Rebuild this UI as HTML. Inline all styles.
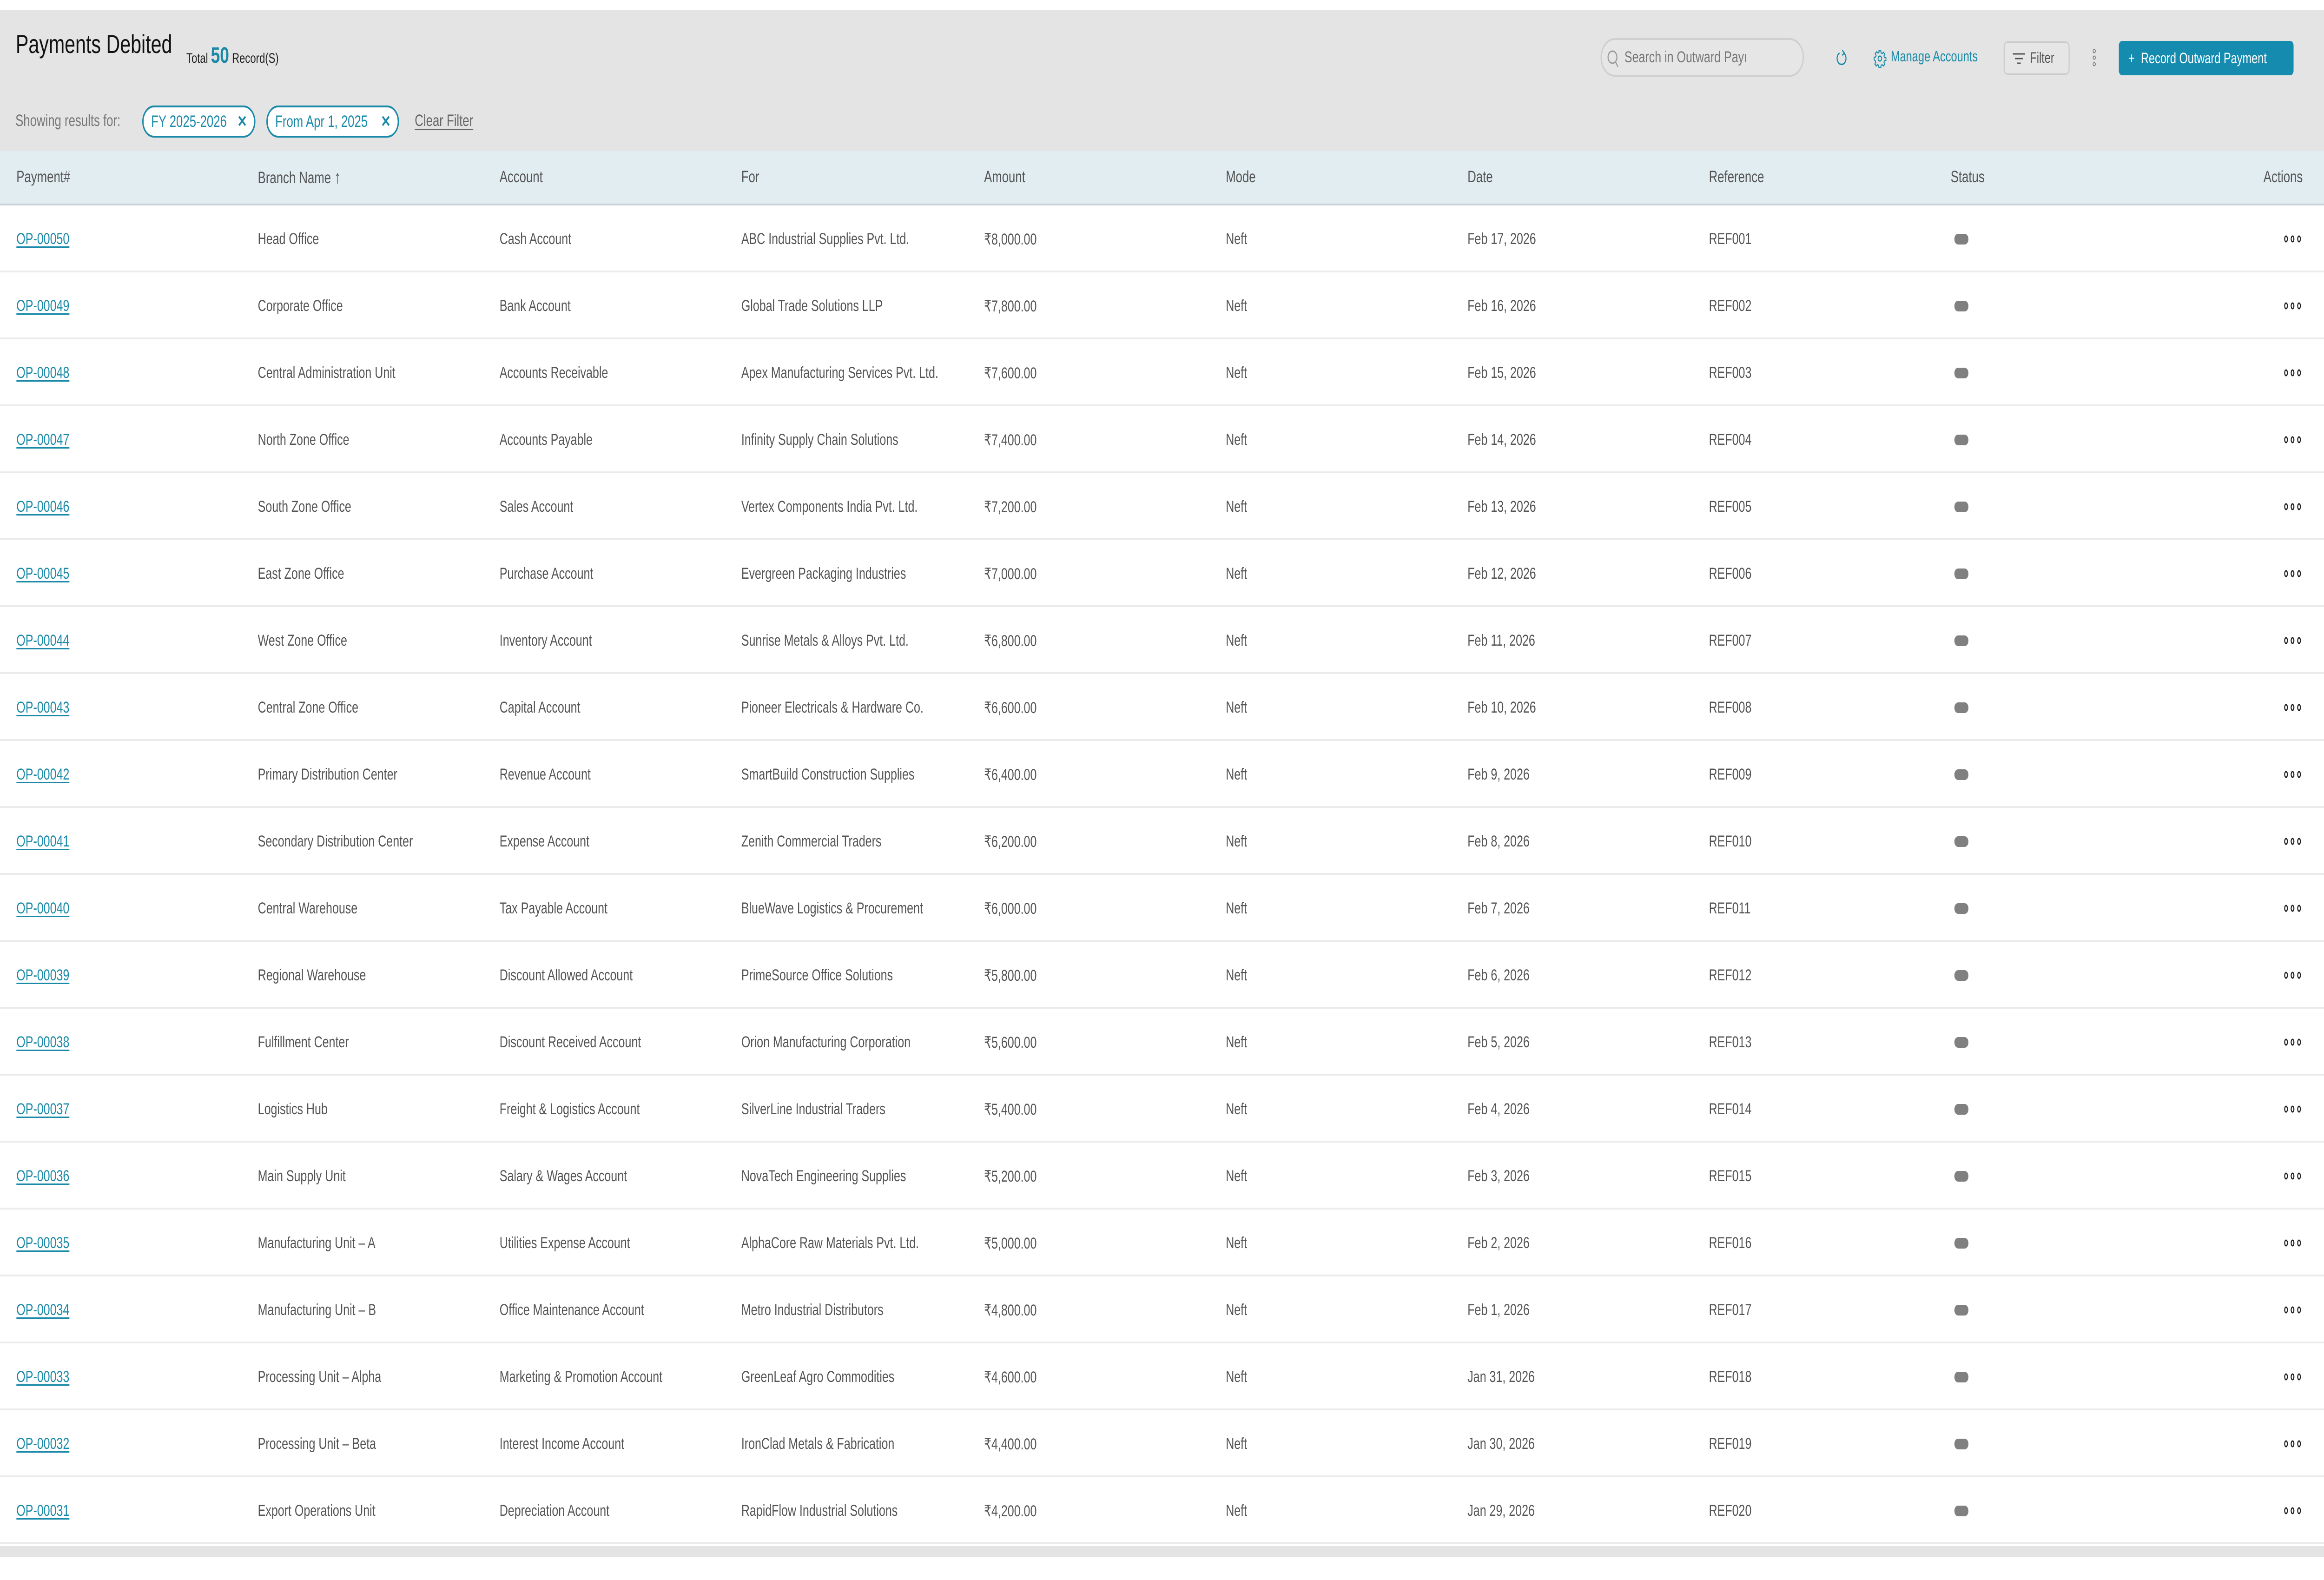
<!DOCTYPE html>
<html><head><meta charset="utf-8"><style>
*{margin:0;padding:0;box-sizing:border-box}
html,body{width:100%;height:100%;overflow:hidden;background:#fff}
body{font-family:"Liberation Sans",sans-serif;color:#555}
#pg{position:absolute;left:0;top:0;width:6797px;height:3399px;transform-origin:0 0;overflow:hidden;background:#fff}
.a{position:absolute;white-space:nowrap}
#top{position:absolute;left:0;top:21px;width:6797px;height:304px;background:#e4e4e4}
#hdr{position:absolute;left:0;top:325px;width:6797px;height:117px;background:#e2edf1;border-bottom:4px solid #c9d1d6}
.h{position:absolute;top:361px;font-size:35px;color:#555}
.row{position:absolute;left:0;width:6797px;height:144px;border-bottom:4px solid #ebebeb}
.c{position:absolute;top:53px;font-size:34px;color:#555;white-space:nowrap}
.lk{color:#1a8aa8;text-decoration:underline;text-underline-offset:5px}
.pill{position:absolute;left:5716px;top:61px;width:41px;height:23px;border-radius:11px;background:#808080}
.dots{position:absolute;left:6680px;top:64px}
.chip{position:absolute;top:227px;height:69px;border:4px solid #1a8aa8;border-radius:35px;background:#fff;color:#1a8aa8;font-size:35px;line-height:61px;padding-left:22px}
</style></head><body>
<div id="pg">
<div id="top"></div>
<div class="a" style="left:46px;top:62px;font-size:56px;color:#111">Payments Debited</div>
<div class="a" style="left:545px;top:92px;font-size:30px;color:#222">Total <span style="font-size:48px;font-weight:bold;color:#1a8aa8">50</span> Record(S)</div>
<div class="a" style="left:45px;top:240px;font-size:35px;color:#777">Showing results for:</div>
<div class="chip" style="left:416px;width:331px">FY 2025-2026 <span style="position:absolute;right:20px;font-weight:bold">✕</span></div>
<div class="chip" style="left:779px;width:388px">From Apr 1, 2025 <span style="position:absolute;right:20px;font-weight:bold">✕</span></div>
<div class="a" style="left:1213px;top:240px;font-size:35px;color:#666;text-decoration:underline;text-underline-offset:6px">Clear Filter</div>

<div class="a" style="left:4681px;top:82px;width:595px;height:83px;border:4px solid #cfcfcf;border-radius:42px;background:#e6e6e6;overflow:hidden">
<svg style="position:absolute;left:14px;top:20px" width="36" height="42" viewBox="0 0 36 42"><circle cx="17" cy="17" r="13" fill="none" stroke="#999" stroke-width="3"/><line x1="26" y1="27" x2="33" y2="38" stroke="#999" stroke-width="3"/></svg>
<div class="a" style="left:66px;top:18px;font-size:34px;color:#777">Search in Outward Payı</div></div>
<svg class="a" style="left:5370px;top:106px" width="34" height="36" viewBox="0 0 34 36"><path d="M22 8 A13 13 0 1 1 10 8" fill="none" stroke="#1a8aa8" stroke-width="3"/><path d="M18 2 L24 8 L18 13" fill="none" stroke="#1a8aa8" stroke-width="3"/></svg>
<svg class="a" style="left:5478px;top:106px" width="40" height="40" viewBox="0 0 24 24"><path fill="none" stroke="#1a8aa8" stroke-width="1.5" d="M10.3 2h3.4l.5 2.7 1.9.8 2.3-1.6 2.4 2.4-1.6 2.3.8 1.9 2.7.5v3.4l-2.7.5-.8 1.9 1.6 2.3-2.4 2.4-2.3-1.6-1.9.8-.5 2.7h-3.4l-.5-2.7-1.9-.8-2.3 1.6-2.4-2.4 1.6-2.3-.8-1.9L2 13.7v-3.4l2.7-.5.8-1.9-1.6-2.3 2.4-2.4 2.3 1.6 1.9-.8z"/><circle cx="12" cy="12" r="3.2" fill="none" stroke="#1a8aa8" stroke-width="1.5"/></svg>
<div class="a" style="left:5530px;top:103px;font-size:32px;color:#1a8aa8">Manage Accounts</div>
<div class="a" style="left:5860px;top:89px;width:193px;height:72px;border:3px solid #cbcbcb;border-radius:12px;background:#e6e6e6">
<svg style="position:absolute;left:22px;top:20px" width="40" height="30" viewBox="0 0 40 30"><line x1="2" y1="4" x2="38" y2="4" stroke="#555" stroke-width="3"/><line x1="8" y1="14" x2="32" y2="14" stroke="#555" stroke-width="3"/><line x1="15" y1="24" x2="25" y2="24" stroke="#555" stroke-width="3"/></svg>
<div class="a" style="left:74px;top:14px;font-size:32px;color:#555">Filter</div></div>
<svg class="a" style="left:6117px;top:104px" width="16" height="40" viewBox="0 0 16 40"><circle cx="8" cy="6" r="3.5" fill="none" stroke="#777" stroke-width="2"/><circle cx="8" cy="20" r="3.5" fill="none" stroke="#777" stroke-width="2"/><circle cx="8" cy="34" r="3.5" fill="none" stroke="#777" stroke-width="2"/></svg>
<div class="a" style="left:6197px;top:88px;width:511px;height:74px;background:#168bb0;border-radius:10px;color:#fff;font-size:32px;line-height:74px;padding-left:28px">+&nbsp; Record Outward Payment</div>

<div id="hdr"></div>
<div class="h" style="left:48px">Payment#</div>
<div class="h" style="left:754px">Branch Name <span style="font-size:38px">↑</span></div>
<div class="h" style="left:1461px">Account</div>
<div class="h" style="left:2168px">For</div>
<div class="h" style="left:2878px">Amount</div>
<div class="h" style="left:3585px">Mode</div>
<div class="h" style="left:4292px">Date</div>
<div class="h" style="left:4998px">Reference</div>
<div class="h" style="left:5705px">Status</div>
<div class="h" style="left:6620px">Actions</div>

<div id="rows"></div>
<div class="a" style="left:0;top:3326px;width:6797px;height:24px;background:#e4e4e4"></div>
</div>
<script>
var d=[
["Head Office","Cash Account","ABC Industrial Supplies Pvt. Ltd."],
["Corporate Office","Bank Account","Global Trade Solutions LLP"],
["Central Administration Unit","Accounts Receivable","Apex Manufacturing Services Pvt. Ltd."],
["North Zone Office","Accounts Payable","Infinity Supply Chain Solutions"],
["South Zone Office","Sales Account","Vertex Components India Pvt. Ltd."],
["East Zone Office","Purchase Account","Evergreen Packaging Industries"],
["West Zone Office","Inventory Account","Sunrise Metals & Alloys Pvt. Ltd."],
["Central Zone Office","Capital Account","Pioneer Electricals & Hardware Co."],
["Primary Distribution Center","Revenue Account","SmartBuild Construction Supplies"],
["Secondary Distribution Center","Expense Account","Zenith Commercial Traders"],
["Central Warehouse","Tax Payable Account","BlueWave Logistics & Procurement"],
["Regional Warehouse","Discount Allowed Account","PrimeSource Office Solutions"],
["Fulfillment Center","Discount Received Account","Orion Manufacturing Corporation"],
["Logistics Hub","Freight & Logistics Account","SilverLine Industrial Traders"],
["Main Supply Unit","Salary & Wages Account","NovaTech Engineering Supplies"],
["Manufacturing Unit – A","Utilities Expense Account","AlphaCore Raw Materials Pvt. Ltd."],
["Manufacturing Unit – B","Office Maintenance Account","Metro Industrial Distributors"],
["Processing Unit – Alpha","Marketing & Promotion Account","GreenLeaf Agro Commodities"],
["Processing Unit – Beta","Interest Income Account","IronClad Metals & Fabrication"],
["Export Operations Unit","Depreciation Account","RapidFlow Industrial Solutions"]];
var dates=["Feb 17, 2026","Feb 16, 2026","Feb 15, 2026","Feb 14, 2026","Feb 13, 2026","Feb 12, 2026","Feb 11, 2026","Feb 10, 2026","Feb 9, 2026","Feb 8, 2026","Feb 7, 2026","Feb 6, 2026","Feb 5, 2026","Feb 4, 2026","Feb 3, 2026","Feb 2, 2026","Feb 1, 2026","Jan 31, 2026","Jan 30, 2026","Jan 29, 2026"];
var h="";
for(var i=0;i<20;i++){
var n=50-i,amt=(8000-200*i),a="₹"+Math.floor(amt/1000)+","+String(amt%1000).padStart(3,"0")+".00";
var r=String(i+1).padStart(3,"0");
h+='<div class="row" style="top:'+(442+i*144)+'px">'+
'<div class="c lk" style="left:48px">OP-000'+n+'</div>'+
'<div class="c" style="left:754px">'+d[i][0]+'</div>'+
'<div class="c" style="left:1461px">'+d[i][1]+'</div>'+
'<div class="c" style="left:2168px">'+d[i][2]+'</div>'+
'<div class="c" style="left:2878px">'+a+'</div>'+
'<div class="c" style="left:3585px">Neft</div>'+
'<div class="c" style="left:4292px">'+dates[i]+'</div>'+
'<div class="c" style="left:4998px">REF'+r+'</div>'+
'<div class="pill"></div>'+
'<svg class="dots" width="50" height="16" viewBox="0 0 50 16"><ellipse cx="6" cy="8" rx="4" ry="6" fill="none" stroke="#222" stroke-width="3"/><ellipse cx="25" cy="8" rx="4" ry="6" fill="none" stroke="#222" stroke-width="3"/><ellipse cx="44" cy="8" rx="4" ry="6" fill="none" stroke="#222" stroke-width="3"/></svg>'+
'</div>';}
document.getElementById("rows").innerHTML=h;
function fit(){var w=document.documentElement.clientWidth||window.innerWidth,hh=document.documentElement.clientHeight||window.innerHeight;
var sx=w/6797,sy=hh/3399;if(!(sx>0))sx=1;if(!(sy>0))sy=1;
document.getElementById("pg").style.transform="scale("+sx+","+sy+")";}
fit();window.addEventListener("resize",fit);
</script>
</body></html>
